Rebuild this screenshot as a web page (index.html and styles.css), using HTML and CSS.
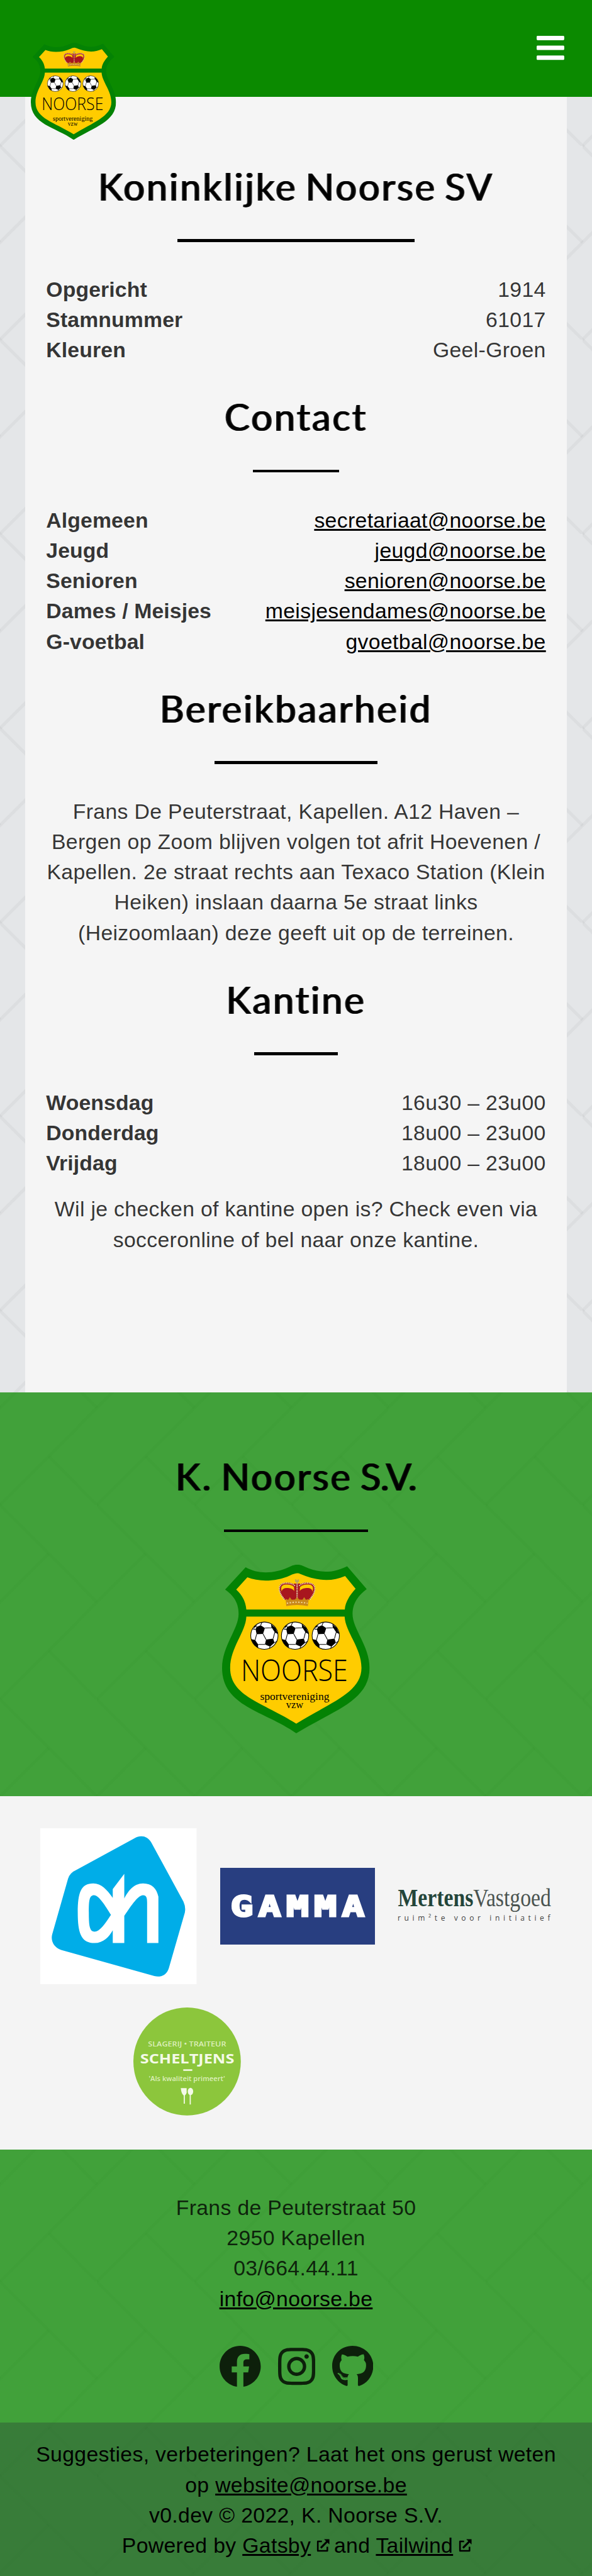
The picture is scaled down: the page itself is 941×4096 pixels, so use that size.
FILE: index.html
```html
<!DOCTYPE html>
<html lang="nl">
<head>
<meta charset="utf-8">
<title>K. Noorse S.V.</title>
<link rel="stylesheet" href="styles.css">
</head>
<body>
<svg class="defs" aria-hidden="true">
  <defs>
    <g id="ball">
      <circle r="81" fill="#fff" stroke="#000" stroke-width="4"/>
      <path d="M-47-52L-22-62L3-45L-8-11L-46-9L-52-38ZM42-66L66-46L80-10L62-20L44-47ZM10 23L52 17L60 42L34 65L3 52ZM-80 20L-55 26L-37 52L-38 74L-60 56ZM-64-50L-45-66L-58-46Z"/>
      <path d="M3-45L44-47M44-47L42-66M-22-62L-14-80M-52-38L-68-40M-46-9L-55 26M-8-11L10 23M62-20L52 17M-37 52L3 52M34 65L28 77M60 42L76 32M62-20L80-16M-45-58L-62-50" fill="none" stroke="#000" stroke-width="4"/>
    </g>
    <symbol id="crest" viewBox="118 98 876 1000" preserveAspectRatio="none">
      <path fill="#048204" d="M258 113C330 155 425 153 515 112Q563 85 605 108C700 150 770 150 860 107L976 243C915 290 892 335 892 390C892 480 993 580 993 710C993 910 770 965 558 1098C370 965 118 940 118 710C118 580 216 480 216 390C216 335 195 285 136 245Z"/>
      <path fill="#fc0" d="M268 173C340 202 440 198 520 162Q563 142 580 152C690 197 765 200 848 165L910 241C870 285 848 325 846 364H262C258 320 240 280 202 245Z"/>
      <path fill="#fc0" d="M262 406H845C850 500 945 590 945 710C945 860 750 920 558 1041C360 915 166 880 166 710C166 590 258 500 262 406Z"/>
      <path fill="#a8161e" d="M500 306C450 255 475 232 515 237C545 240 558 262 560 306ZM566 306C566 262 580 240 612 237C652 232 675 255 626 306ZM543 210H582L575 300H550Z"/>
      <path fill="none" stroke="#a8161e" stroke-width="12" d="M496 304C448 250 455 212 495 210C520 209 540 216 548 226M630 304C678 250 671 212 631 210C606 209 586 216 578 226"/>
      <path fill="none" stroke="#e0d3b0" stroke-width="8" stroke-dasharray="6 4" d="M488 304C442 250 452 209 495 207C525 206 545 214 552 226M638 304C684 250 674 209 631 207C601 206 581 214 574 226M563 206V300"/>
      <path fill="#c9891b" d="M495 300L510 308L520 290L532 308L550 305L563 290L576 305L594 308L605 290L616 308L632 300L627 343Q563 330 499 343Z"/>
      <path fill="none" stroke="#f2dca0" stroke-width="7" stroke-dasharray="8 9" d="M502 327Q563 314 625 327"/>
      <path fill="#b9a45c" d="M551 185H559V190H567V185H574V201H567V208H559V201H551Z"/>
      <use href="#ball" x="369" y="519"/><use href="#ball" x="551" y="519"/><use href="#ball" x="733" y="519"/>
      <text class="crest-name" x="230" y="790" textLength="634" lengthAdjust="spacingAndGlyphs">NOORSE</text>
      <text class="crest-sub" x="344" y="902" textLength="410" lengthAdjust="spacingAndGlyphs">sportvereniging</text>
      <text class="crest-sub" x="498" y="950" textLength="102" lengthAdjust="spacingAndGlyphs">vzw</text>
    </symbol>
    <symbol id="external" viewBox="0 0 24 24">
      <path fill="none" stroke="currentColor" stroke-width="3" stroke-linejoin="round" d="M10 4H2.500V21.500H20V14"/>
      <path fill="none" stroke="currentColor" stroke-width="3.600" d="M8 16L20 4"/>
      <path fill="currentColor" d="M14 0H24V10Z"/>
    </symbol>
  </defs>
</svg>

<header class="header">
  <a class="header-logo" href="#"><svg><use href="#crest"/></svg></a>
  <svg class="menu" viewBox="0 0 448 512"><path fill="#fff" d="M16 132h416c8.800 0 16-7.200 16-16V76c0-8.800-7.200-16-16-16H16C7.200 60 0 67.200 0 76v40c0 8.800 7.200 16 16 16zm0 160h416c8.800 0 16-7.200 16-16v-40c0-8.800-7.200-16-16-16H16c-8.800 0-16 7.200-16 16v40c0 8.800 7.200 16 16 16zm0 160h416c8.800 0 16-7.200 16-16v-40c0-8.800-7.200-16-16-16H16c-8.800 0-16 7.200-16 16v40c0 8.800 7.200 16 16 16z"/></svg>
</header>

<main class="content">
  <h2 class="title">Koninklijke Noorse SV</h2>
  <dl class="rows">
    <div><dt>Opgericht</dt><dd>1914</dd></div>
    <div><dt>Stamnummer</dt><dd>61017</dd></div>
    <div><dt>Kleuren</dt><dd>Geel-Groen</dd></div>
  </dl>
  <h2 class="title">Contact</h2>
  <dl class="rows">
    <div><dt>Algemeen</dt><dd><a href="#">secretariaat@noorse.be</a></dd></div>
    <div><dt>Jeugd</dt><dd><a href="#">jeugd@noorse.be</a></dd></div>
    <div><dt>Senioren</dt><dd><a href="#">senioren@noorse.be</a></dd></div>
    <div><dt>Dames / Meisjes</dt><dd><a href="#">meisjesendames@noorse.be</a></dd></div>
    <div><dt>G-voetbal</dt><dd><a href="#">gvoetbal@noorse.be</a></dd></div>
  </dl>
  <h2 class="title">Bereikbaarheid</h2>
  <p class="text">Frans De Peuterstraat, Kapellen. A12 Haven –<br>Bergen op Zoom blijven volgen tot afrit Hoevenen /<br>Kapellen. 2e straat rechts aan Texaco Station (Klein<br>Heiken) inslaan daarna 5e straat links<br>(Heizoomlaan) deze geeft uit op de terreinen.</p>
  <h2 class="title">Kantine</h2>
  <dl class="rows">
    <div><dt>Woensdag</dt><dd>16u30 – 23u00</dd></div>
    <div><dt>Donderdag</dt><dd>18u00 – 23u00</dd></div>
    <div><dt>Vrijdag</dt><dd>18u00 – 23u00</dd></div>
  </dl>
  <p class="text note">Wil je checken of kantine open is? Check even via<br>socceronline of bel naar onze kantine.</p>
</main>

<footer class="footer">
  <section class="club">
    <h2 class="title"><span>K. Noorse <span class="initials">S.V.</span></span></h2>
    <svg class="club-logo"><use href="#crest"/></svg>
  </section>

  <section class="partners">
    <div class="partner-row">
      <svg class="ah" viewBox="45 38 692 781" preserveAspectRatio="none">
        <rect x="45" y="38" width="692" height="781" fill="#fff"/>
        <path fill="#00ade8" d="M462 88C490 70 520 76 537 110L679 405Q690 433 685 460L614 738C604 773 580 784 550 777L137 646C105 634 90 600 98 568L168 290Q176 260 205 246Z"/>
        <path fill="#fff" fill-rule="evenodd" d="M366 386C340 345 315 314 280 314C225 314 211 360 211 460C211 560 225 612 285 612C325 612 350 580 366 548V612H417V476C440 440 475 373 500 373C515 373 518 385 518 410V612H568V380C560 340 540 314 500 314C460 314 435 350 417 389V266L366 342ZM358 471C335 430 305 373 283 373C262 373 260 400 260 460C260 520 262 555 285 555C310 555 335 510 358 471Z"/>
      </svg>
      <svg class="gamma" viewBox="833 235 686 386" preserveAspectRatio="none">
        <rect x="833" y="235" width="686" height="386" fill="#283e80"/>
        <text class="gamma-name" transform="translate(879 0) scale(1.2 1)" x="0 102.800 205.600 308.400 411.200" y="477">GAMMA</text>
      </svg>
      <svg class="mertens" viewBox="137 138 912 260">
        <text class="mertens-name" x="139" y="268" textLength="908" lengthAdjust="spacingAndGlyphs"><tspan class="mertens-bold">Mertens</tspan>Vastgoed</text>
        <text class="mertens-sub" x="137" y="355" textLength="905">ruim²te voor initiatief</text>
      </svg>
    </div>
    <div class="partner-row second">
      <svg class="scheltjens" viewBox="457 935 476 540" preserveAspectRatio="none">
        <ellipse cx="695" cy="1205" rx="238" ry="270" fill="#8cc63c"/>
        <text class="sch-s" x="522" y="1131" textLength="346" lengthAdjust="spacingAndGlyphs">SLAGERIJ • TRAITEUR</text>
        <text class="sch-b" x="487" y="1215" textLength="417" lengthAdjust="spacingAndGlyphs">SCHELTJENS</text>
        <path stroke="#f4fae8" stroke-width="8" d="M678 1248H718"/>
        <text class="sch-s" x="525" y="1303" textLength="338" lengthAdjust="spacingAndGlyphs">'Als kwaliteit primeert'</text>
        <path fill="#f4fae8" d="M667 1338H693V1362Q690 1372 685 1375V1416H680V1375Q670 1368 667 1338Z"/>
        <ellipse cx="710" cy="1355" rx="12" ry="18" fill="#f4fae8"/>
        <path stroke="#f4fae8" stroke-width="5" d="M709 1365V1420"/>
      </svg>
    </div>
  </section>

  <section class="address">
    <p>Frans de Peuterstraat 50<br>2950 Kapellen<br>03/664.44.11<br><a href="#">info@noorse.be</a></p>
    <div class="social">
      <svg class="fb" viewBox="0 0 512 512"><path d="M504 256C504 119 393 8 256 8S8 119 8 256c0 123.780 90.690 226.380 209.250 245V327.690h-63V256h63v-54.640c0-62.150 37-96.480 93.670-96.480 27.140 0 55.520 4.840 55.520 4.840v61h-31.280c-30.800 0-40.410 19.120-40.410 38.730V256h68.780l-11 71.690h-57.780V501C413.310 482.380 504 379.780 504 256z"/></svg>
      <svg class="ig" viewBox="0 0 448 512"><path d="M224.100 141c-63.600 0-114.900 51.300-114.900 114.900s51.300 114.900 114.900 114.900S339 319.500 339 255.900 287.700 141 224.100 141zm0 189.600c-41.100 0-74.700-33.500-74.700-74.700s33.500-74.700 74.700-74.700 74.700 33.500 74.700 74.700-33.600 74.700-74.700 74.700zm146.400-194.300c0 14.900-12 26.800-26.800 26.800-14.900 0-26.800-12-26.800-26.800s12-26.800 26.800-26.800 26.800 12 26.800 26.800zm76.100 27.200c-1.700-35.900-9.900-67.700-36.200-93.900-26.200-26.200-58-34.400-93.900-36.200-37-2.100-147.900-2.100-184.900 0-35.800 1.700-67.600 9.900-93.900 36.100s-34.400 58-36.200 93.900c-2.100 37-2.100 147.900 0 184.900 1.700 35.900 9.900 67.700 36.200 93.900s58 34.400 93.900 36.200c37 2.100 147.900 2.100 184.900 0 35.900-1.700 67.700-9.900 93.900-36.200 26.200-26.200 34.400-58 36.200-93.900 2.100-37 2.100-147.800 0-184.800zM398.800 388c-7.800 19.600-22.900 34.700-42.600 42.600-29.500 11.700-99.500 9-132.100 9s-102.700 2.600-132.100-9c-19.600-7.800-34.700-22.900-42.600-42.600-11.700-29.500-9-99.500-9-132.100s-2.600-102.700 9-132.100c7.800-19.600 22.900-34.700 42.600-42.600 29.500-11.700 99.500-9 132.100-9s102.700-2.600 132.100 9c19.600 7.800 34.700 22.900 42.600 42.600 11.700 29.500 9 99.500 9 132.100s2.700 102.700-9 132.100z"/></svg>
      <svg class="gh" viewBox="0 0 496 512"><path d="M165.900 397.400c0 2-2.300 3.600-5.200 3.600-3.300.3-5.600-1.300-5.600-3.600 0-2 2.300-3.600 5.200-3.600 3-.3 5.600 1.300 5.600 3.600zm-31.100-4.500c-.7 2 1.300 4.300 4.300 4.900 2.600 1 5.600 0 6.200-2s-1.300-4.300-4.300-5.200c-2.600-.7-5.500.3-6.200 2.300zm44.200-1.700c-2.900.7-4.900 2.600-4.600 4.900.3 2 2.900 3.300 5.900 2.600 2.900-.7 4.900-2.600 4.600-4.600-.3-1.900-3-3.200-5.900-2.900zM244.800 8C106.100 8 0 113.300 0 252c0 110.900 69.800 205.800 169.500 239.200 12.800 2.300 17.300-5.600 17.300-12.100 0-6.200-.3-40.400-.3-61.400 0 0-70 15-84.700-29.800 0 0-11.400-29.100-27.800-36.600 0 0-22.900-15.700 1.600-15.400 0 0 24.900 2 38.600 25.800 21.900 38.600 58.600 27.500 72.900 20.900 2.300-16 8.800-27.100 16-33.700-55.900-6.200-112.300-14.300-112.300-110.500 0-27.500 7.600-41.300 23.600-58.900-2.600-6.500-11.100-33.300 2.600-67.900 20.900-6.500 69 27 69 27 20-5.600 41.500-8.500 62.800-8.500s42.800 2.900 62.800 8.500c0 0 48.100-33.600 69-27 13.700 34.700 5.200 61.400 2.600 67.900 16 17.700 25.800 31.500 25.800 58.900 0 96.500-58.900 104.200-114.800 110.500 9.200 7.900 17 22.900 17 46.400 0 33.700-.3 75.400-.3 83.600 0 6.500 4.600 14.400 17.300 12.100C428.200 457.800 496 362.900 496 252 496 113.300 383.500 8 244.800 8zM97.200 352.900c-1.300 1-1 3.300.7 5.200 1.600 1.600 3.900 2.300 5.200 1 1.300-1 1-3.300-.7-5.200-1.600-1.600-3.900-2.300-5.200-1zm-10.800-8.100c-.7 1.300.3 2.900 2.300 3.900 1.600 1 3.600.7 4.300-.7.7-1.300-.3-2.900-2.300-3.900-2-.6-3.600-.3-4.300.7zm32.400 35.600c-1.600 1.300-1 4.300 1.300 6.200 2.300 2.300 5.200 2.600 6.500 1 1.300-1.300.7-4.300-1.300-6.200-2.200-2.300-5.200-2.600-6.500-1zm-11.400-14.700c-1.600 1-1.600 3.600 0 5.900 1.600 2.300 4.300 3.300 5.600 2.300 1.600-1.300 1.600-3.900 0-6.200-1.400-2.300-4-3.300-5.600-2z"/></svg>
    </div>
  </section>

  <section class="colophon">
    <p>Suggesties, verbeteringen? Laat het ons gerust weten<br>op <a href="#">website@noorse.be</a><br>v0.dev © 2022, K. Noorse S.V.<br>Powered by <a href="#">Gatsby</a><svg class="ext"><use href="#external"/></svg> and <a href="#">Tailwind</a><svg class="ext"><use href="#external"/></svg></p>
  </section>
</footer>
</body>
</html>
```
FILE: styles.css
```css
/* 1rem is ten design units; the page is 39rem wide */
html {
  font-size: 24.123px;
  background: #e4e6e8 url("data:image/svg+xml,%3Csvg xmlns='http://www.w3.org/2000/svg' viewBox='0 0 64 128' width='64' height='128'%3E%3Cg fill='none' stroke='%23000' stroke-opacity='.035' stroke-width='2'%3E%3Cpath d='M-64 128L32 32'/%3E%3Cpath d='M0 128L96 32'/%3E%3Cpath d='M-64 0L-30-34'/%3E%3Cpath d='M0 256L96 160'/%3E%3Cpath d='M-64 256L32 160'/%3E%3Cpath d='M0 0L64-64'/%3E%3Cpath d='M-32 -32L64 64'/%3E%3Cpath d='M-96 -32L0 64'/%3E%3Cpath d='M32 96L128 192'/%3E%3Cpath d='M-32 96L64 192'/%3E%3C/g%3E%3C/svg%3E") 0 -3.2rem / 6.4rem 12.8rem;
}
body {
  margin: 0;
  font: 1.4rem/2rem "Liberation Sans", Arial, sans-serif;
  letter-spacing: .014rem;
  color: rgba(0, 0, 0, .8);
}
p, h2, dl, dd { margin: 0; }
a { color: #000; }
svg { display: block; }
.defs { position: absolute; width: 0; height: 0; }

.header {
  position: relative;
  display: flex;
  justify-content: flex-end;
  height: 6.4rem;
  padding: 2.12rem 1.82rem 0 0;
  box-sizing: border-box;
  background: #0b8a00;
}
.header-logo { position: absolute; left: 2.04rem; top: 2.8rem; }
.header-logo svg { width: 5.62rem; height: 6.4rem; }
.menu { width: 1.82rem; height: 2.08rem; }

.content {
  box-sizing: border-box;
  height: 85.4rem;
  margin: 0 1.64rem;
  padding: 2.47rem 1.4rem 0;
  background: #f5f5f5;
}
.title {
  display: flex;
  flex-direction: column;
  width: max-content;
  margin: 0 auto 2.12rem;
  padding-top: 1.9rem;
  font: 400 2.48rem/3rem Lato, sans-serif;
  letter-spacing: .115rem;
  word-spacing: -.2rem;
  color: rgba(0, 0, 0, .8);
  text-shadow: -.05rem 0 rgba(0, 0, 0, .8), .05rem 0 rgba(0, 0, 0, .8);
}
.title::after {
  content: "";
  width: 60%;
  height: .2rem;
  margin: 1.98rem auto 0;
  background: #000;
}
.initials { letter-spacing: -.035rem; }
.rows div { display: flex; justify-content: space-between; }
.rows dt { font-weight: 700; letter-spacing: .005rem; }
.text { text-align: center; white-space: nowrap; }
.note { margin-top: 1.03rem; }

.footer { background: rgba(11, 138, 0, .75); text-align: center; }
.club { height: 26.6rem; padding-top: 2.12rem; box-sizing: border-box; }
.club-logo { width: 9.73rem; height: 11.11rem; margin: 0 auto; }

svg text { letter-spacing: 0; }
.crest-name { font: 300 176px "Open Sans", sans-serif; }
.crest-sub { font: 62px "Liberation Serif", serif; }

.partners {
  height: 23.3rem;
  box-sizing: border-box;
  padding: 2.1rem 2.67rem 0;
  background: #f4f4f4;
}
.partner-row { display: flex; align-items: center; justify-content: space-between; }
.second { justify-content: flex-start; padding: 1.52rem 0 0 6.13rem; }
.ah { width: 10.3rem; height: 10.3rem; }
.gamma { width: 10.2rem; height: 5.09rem; }
.mertens { width: 10.13rem; height: 2.89rem; overflow: visible; }
.scheltjens { width: 7.08rem; height: 7.12rem; }
.gamma-name { font: 700 138px "DejaVu Sans Mono", monospace; fill: #fff; stroke: #fff; stroke-width: 9px; }
.mertens-name { font: 147px "Liberation Serif", serif; fill: #4a5350; }
.mertens-bold { font-weight: 700; fill: #23453a; }
.mertens-sub { font: 45px "Open Sans", sans-serif; fill: #444; }
.sch-s { font: 600 36px "Open Sans", sans-serif; fill: #dcefbb; }
.sch-b { font: 700 67px "Open Sans", sans-serif; fill: #f4fae8; }

.address { height: 18rem; padding-top: 2.81rem; box-sizing: border-box; }
.social { display: flex; justify-content: center; gap: 1.1rem; margin-top: 2.07rem; }
.social svg { height: 2.8rem; fill: currentColor; }
.fb { width: 2.8rem; }
.ig { width: 2.45rem; }
.gh { width: 2.71rem; }

.colophon {
  height: 10.1rem;
  box-sizing: border-box;
  padding-top: 1.08rem;
  background: rgba(35, 41, 55, .3);
  color: #000;
}
.ext { display: inline-block; width: .86rem; height: .9rem; margin: 0 -.1rem 0 .36rem; }
```
